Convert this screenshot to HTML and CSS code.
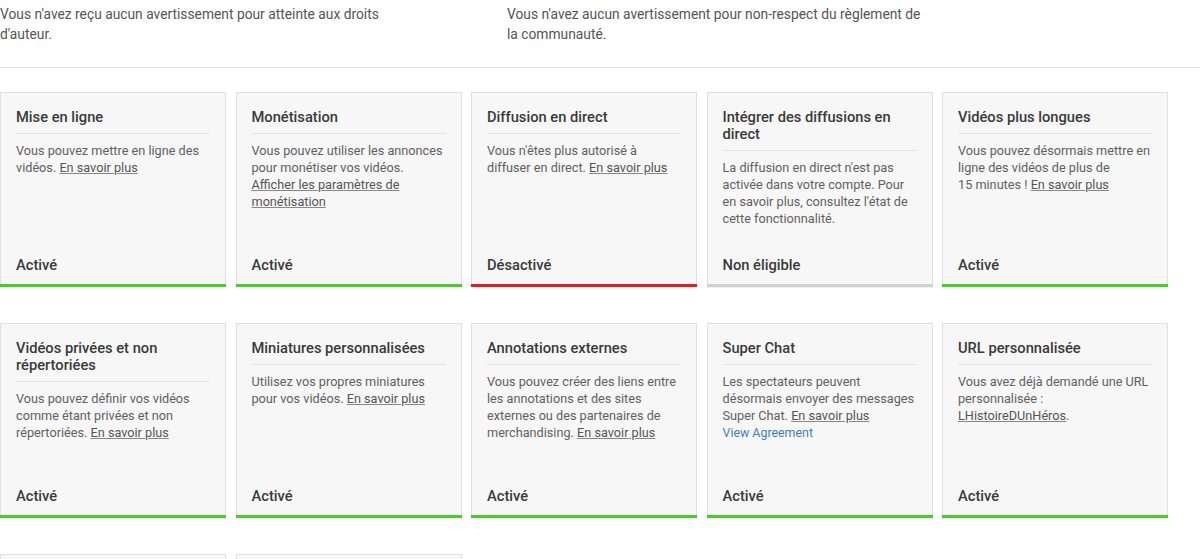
FILE: index.html
```html
<!DOCTYPE html>
<html lang="fr">
<head>
<meta charset="utf-8">
<title>Statut et fonctionnalités</title>
<link rel="stylesheet" href="styles.css">
</head>
<body>
<div class="strikes">
  <p class="strike">Vous n'avez reçu aucun avertissement pour atteinte aux droits d'auteur.</p>
  <p class="strike">Vous n'avez aucun avertissement pour non-respect du règlement de la communauté.</p>
</div>
<div class="features">
  <div class="card ok">
    <h3 class="title">Mise en ligne</h3>
    <p class="desc">Vous pouvez mettre en ligne des vidéos. <a href="#">En savoir plus</a></p>
    <div class="status">Activé</div>
  </div>
  <div class="card ok">
    <h3 class="title">Monétisation</h3>
    <p class="desc">Vous pouvez utiliser les annonces pour monétiser vos vidéos. <a class="block" href="#">Afficher les paramètres de monétisation</a></p>
    <div class="status">Activé</div>
  </div>
  <div class="card off">
    <h3 class="title">Diffusion en direct</h3>
    <p class="desc">Vous n'êtes plus autorisé à diffuser en direct. <a href="#">En savoir plus</a></p>
    <div class="status">Désactivé</div>
  </div>
  <div class="card na">
    <h3 class="title">Intégrer des diffusions en direct</h3>
    <p class="desc">La diffusion en direct n'est pas activée dans votre compte. Pour en savoir plus, consultez l'état de cette fonctionnalité.</p>
    <div class="status">Non éligible</div>
  </div>
  <div class="card ok">
    <h3 class="title">Vidéos plus longues</h3>
    <p class="desc">Vous pouvez désormais mettre en ligne des vidéos de plus de 15&nbsp;minutes&nbsp;! <a href="#">En savoir plus</a></p>
    <div class="status">Activé</div>
  </div>
  <div class="card ok">
    <h3 class="title">Vidéos privées et non répertoriées</h3>
    <p class="desc">Vous pouvez définir vos vidéos comme étant privées et non répertoriées. <a href="#">En savoir plus</a></p>
    <div class="status">Activé</div>
  </div>
  <div class="card ok">
    <h3 class="title">Miniatures personnalisées</h3>
    <p class="desc">Utilisez vos propres miniatures pour vos vidéos. <a href="#">En savoir plus</a></p>
    <div class="status">Activé</div>
  </div>
  <div class="card ok">
    <h3 class="title">Annotations externes</h3>
    <p class="desc">Vous pouvez créer des liens entre les annotations et des sites externes ou des partenaires de merchandising. <a href="#">En savoir plus</a></p>
    <div class="status">Activé</div>
  </div>
  <div class="card ok">
    <h3 class="title">Super Chat</h3>
    <p class="desc">Les spectateurs peuvent désormais envoyer des messages Super Chat. <a href="#">En savoir plus</a><a class="agree" href="#">View Agreement</a></p>
    <div class="status">Activé</div>
  </div>
  <div class="card ok">
    <h3 class="title">URL personnalisée</h3>
    <p class="desc">Vous avez déjà demandé une URL personnalisée&nbsp;: <a href="#">LHistoireDUnHéros</a>.</p>
    <div class="status">Activé</div>
  </div>
  <div class="card ok"></div>
  <div class="card ok"></div>
</div>
</body>
</html>
```
FILE: styles.css
```css
html, body {
  margin: 0;
  padding: 0;
  background: #fff;
  overflow: hidden;
}
body {
  font-family: Roboto, "Liberation Sans", Arial, sans-serif;
  color: #555;
}
.strikes {
  display: grid;
  grid-template-columns: 507px 420px;
  padding: 4px 0 23px 0;
  border-bottom: 1px solid #e3e3e3;
}
.strike {
  margin: 0;
  font-size: 13.8px;
  line-height: 20px;
  color: #555;
  max-width: 415px;
}
.features {
  display: grid;
  grid-template-columns: repeat(5, 226px);
  column-gap: 9.5px;
  row-gap: 36px;
  padding-top: 24px;
}
.card {
  box-sizing: border-box;
  height: 195px;
  background: #f7f7f7;
  border: 1px solid #e0e0e0;
  border-bottom: none;
  box-shadow: 0 1px 1px rgba(0,0,0,0.06);
  padding: 16px 15px 0 15px;
  display: flex;
  flex-direction: column;
  position: relative;
}
.card::after {
  content: "";
  position: absolute;
  left: -1px;
  right: -1px;
  bottom: 0;
  height: 3px;
  background: #4ccb2c;
}
.card.off::after { background: #e0201f; }
.card.na::after { background: #d0d0d0; }
.title {
  margin: 0;
  font-size: 14.7px;
  line-height: 17px;
  font-weight: 500;
  color: #3a3a3a;
  padding-bottom: 7px;
  border-bottom: 1px solid #e3e3e3;
}
.desc {
  margin: 8px 0 0 0;
  font-size: 12.7px;
  line-height: 17px;
  color: #616161;
}
.desc a {
  color: #555;
  text-decoration: underline;
  text-decoration-color: #888;
}
.desc a.block {
  display: block;
  width: 160px;
}
.desc a.agree {
  display: block;
  color: #3f7ec4;
  text-decoration: none;
  font-size: 12.4px;
}
.status {
  margin-top: auto;
  font-size: 14.7px;
  line-height: 17px;
  font-weight: 500;
  color: #3a3a3a;
  padding-bottom: 13px;
}
```
